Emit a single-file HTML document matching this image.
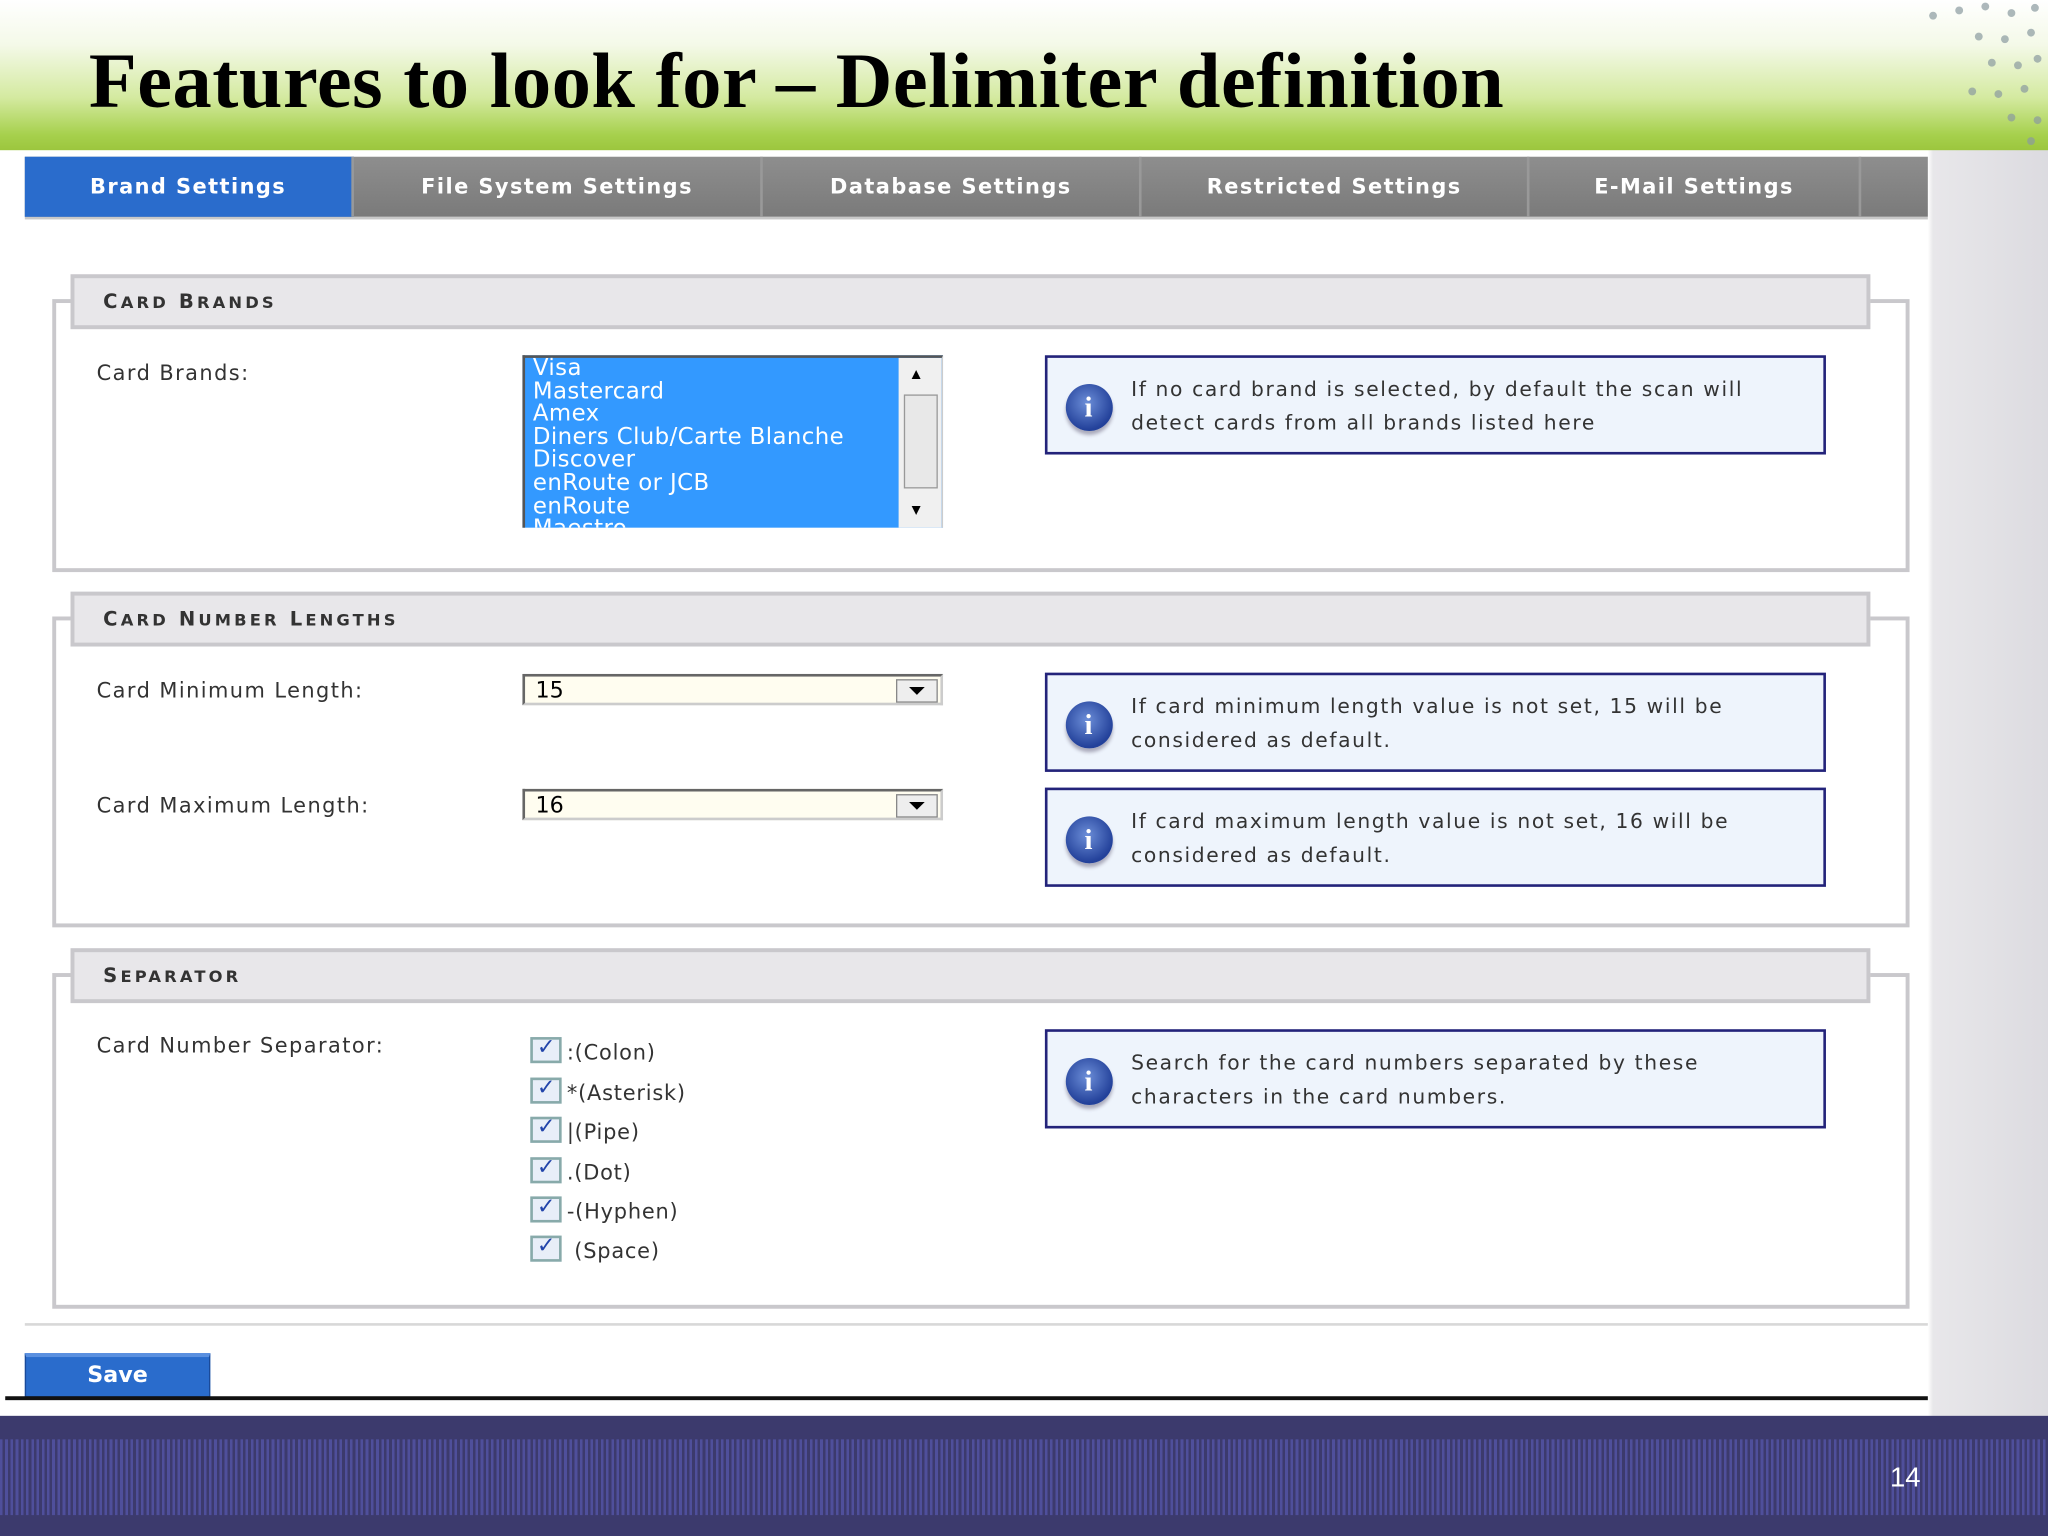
<!DOCTYPE html>
<html><head><meta charset="utf-8"><style>
html,body{margin:0;padding:0;width:2048px;height:1536px;overflow:hidden;background:#fff}
#w{position:absolute;left:0;top:0;width:1568px;height:1176px;transform:scale(1.306122);transform-origin:0 0;font-family:"DejaVu Sans","Liberation Sans",sans-serif;background:linear-gradient(90deg,#fff 0,#fff 1476px,#e8e7ea 1480px,#dcdbe0 1568px)}
.a{position:absolute}
#hdr{left:0;top:0;width:1568px;height:115px;background:linear-gradient(180deg,#fff 0%,#f4f9e8 30%,#d4eaa0 65%,#a6d04c 90%,#9cc63e 100%)}
#title{left:68px;top:28px;font-family:"Liberation Serif",serif;font-weight:bold;font-size:60px;color:#000;letter-spacing:0.4px}
#tabs{left:19px;top:120px;width:1457px;height:46px;background:linear-gradient(#8e8e8e,#7a7a7a);border-bottom:2px solid #c8c8c8}
.tab{position:absolute;top:0;height:46px;line-height:46px;text-align:center;color:#fff;font-weight:bold;font-size:16px;border-right:2px solid #999;letter-spacing:1.1px}
.fs{position:absolute;left:40px;width:1416px;border:3px solid #c9c8cc;background:#fff}
.leg{position:absolute;left:54px;width:1350px;height:36px;background:#e8e7ea;border:3px solid #c9c8cc;font-size:15px;font-weight:bold;color:#333;letter-spacing:2.4px;line-height:36px;padding-left:22px;box-sizing:content-box}
.leg span{font-size:12.5px}
.lbl{position:absolute;left:74px;font-size:16px;color:#333;letter-spacing:1.1px}
.info{position:absolute;left:800px;width:594px;height:72px;border:2px solid #23237a;background:#eef4fc;font-size:15.5px;color:#333;letter-spacing:1.25px;line-height:25.5px;white-space:nowrap}
.info .t{position:absolute;left:64px;top:12px}
.ic{position:absolute;left:14px;top:20px;width:36px;height:36px;border-radius:50%;background:radial-gradient(circle at 45% 40%,#6c8ed8,#23419a 70%);box-shadow:0 3px 3px #aab;color:#fff;font:bold 22px "Liberation Serif",serif;text-align:center;line-height:36px}
.sel{position:absolute;left:400px;width:322px;height:24px;border:2px solid #666;border-right-color:#ccc;border-bottom-color:#ccc;background:#fffdf0;font-size:17px;line-height:22px;padding-left:8px;box-sizing:border-box}
.sel b{position:absolute;right:2px;top:2px;width:30px;height:16px;border:1px solid #888;background:#eee}
.sel b:after{content:"";position:absolute;left:9px;top:5px;border:6px solid transparent;border-top:6px solid #000}
.cb{position:absolute;left:406px;font-size:16px;color:#333;letter-spacing:.6px}
.cb i{display:inline-block;width:20px;height:16px;border:2px solid #8aa;background:#e8eef8;vertical-align:-3px;margin-right:4px;position:relative}
.cb i:after{content:"✓";position:absolute;left:3px;top:-4px;color:#2244aa;font-size:17px;font-style:normal;font-weight:bold}
</style></head><body><div id="w">
<div id="hdr" class="a"></div>
<svg class="a" style="left:1460px;top:0" width="108" height="115"><g fill="#8a9aa0" opacity=".7">
<circle cx="20" cy="12" r="3"/><circle cx="40" cy="8" r="3"/><circle cx="60" cy="5" r="3"/><circle cx="80" cy="10" r="3"/><circle cx="98" cy="6" r="3"/>
<circle cx="55" cy="28" r="3"/><circle cx="75" cy="30" r="3"/><circle cx="95" cy="25" r="3"/><circle cx="65" cy="48" r="3"/><circle cx="85" cy="50" r="3"/><circle cx="100" cy="45" r="3"/>
<circle cx="50" cy="70" r="3"/><circle cx="70" cy="72" r="3"/><circle cx="90" cy="68" r="3"/><circle cx="80" cy="90" r="3"/><circle cx="100" cy="92" r="3"/><circle cx="95" cy="108" r="3"/></g></svg>
<div id="title" class="a">Features to look for – Delimiter definition</div>
<div id="tabs" class="a">
<div class="tab" style="left:0;width:250px;background:#2a6ccc">Brand Settings</div>
<div class="tab" style="left:252px;width:311px">File System Settings</div>
<div class="tab" style="left:565px;width:288px">Database Settings</div>
<div class="tab" style="left:855px;width:295px">Restricted Settings</div>
<div class="tab" style="left:1152px;width:252px">E-Mail Settings</div>
</div>

<div class="fs" style="top:229px;height:203px"></div>
<div class="leg" style="top:210px">C<span>ARD</span> B<span>RANDS</span></div>
<div class="lbl" style="top:276px">Card Brands:</div>
<div class="a" style="left:400px;top:272px;width:322px;height:132px;border:2px solid #555;border-right:1px solid #ccc;border-bottom:0;box-sizing:border-box;overflow:hidden;background:#3399ff">
<div style="color:#fff;font-size:17.5px;line-height:17.6px;padding-left:6px;letter-spacing:.3px;white-space:nowrap">Visa<br>Mastercard<br>Amex<br>Diners Club/Carte Blanche<br>Discover<br>enRoute or JCB<br>enRoute<br>Maestro</div>
<div class="a" style="right:0;top:0;width:33px;height:132px;background:#f0f0f0"><div class="a" style="left:4px;top:28px;width:24px;height:70px;border:1px solid #999;background:#e8e8e8"></div><div class="a" style="left:10px;top:8px;font-size:9px">▲</div><div class="a" style="left:10px;top:112px;font-size:9px">▼</div></div></div>
<div class="info" style="top:272px"><div class="ic">i</div><div class="t">If no card brand is selected, by default the scan will<br>detect cards from all brands listed here</div></div>

<div class="fs" style="top:472px;height:232px"></div>
<div class="leg" style="top:453px">C<span>ARD</span> N<span>UMBER</span> L<span>ENGTHS</span></div>
<div class="lbl" style="top:519px">Card Minimum Length:</div>
<div class="sel" style="top:516px">15<b></b></div>
<div class="info" style="top:515px"><div class="ic">i</div><div class="t">If card minimum length value is not set, 15 will be<br>considered as default.</div></div>
<div class="lbl" style="top:607px">Card Maximum Length:</div>
<div class="sel" style="top:604px">16<b></b></div>
<div class="info" style="top:603px"><div class="ic">i</div><div class="t">If card maximum length value is not set, 16 will be<br>considered as default.</div></div>

<div class="fs" style="top:745px;height:251px"></div>
<div class="leg" style="top:726px">S<span>EPARATOR</span></div>
<div class="lbl" style="top:791px">Card Number Separator:</div>
<div class="cb" style="top:794px"><i></i>:(Colon)</div>
<div class="cb" style="top:825px"><i></i>*(Asterisk)</div>
<div class="cb" style="top:855px"><i></i>|(Pipe)</div>
<div class="cb" style="top:886px"><i></i>.(Dot)</div>
<div class="cb" style="top:916px"><i></i>-(Hyphen)</div>
<div class="cb" style="top:946px"><i></i> (Space)</div>
<div class="info" style="top:788px"><div class="ic">i</div><div class="t">Search for the card numbers separated by these<br>characters in the card numbers.</div></div>

<div class="a" style="left:19px;top:1013px;width:1457px;height:2px;background:#d8d8d8"></div>
<div class="a" style="left:19px;top:1036px;width:142px;height:34px;background:#2a6ccc;border:1px solid #1a4a99;border-top:3px solid #5a90e0;box-sizing:border-box;color:#fff;font-weight:bold;font-size:17px;text-align:center;line-height:28px">Save</div>
<div class="a" style="left:4px;top:1069px;width:1472px;height:3px;background:#111"></div>
<div class="a" style="left:0;top:1084px;width:1568px;height:92px;background:#3c3a6d"></div>
<div class="a" style="left:0;top:1102px;width:1568px;height:58px;background:repeating-linear-gradient(90deg,#5252a0 0 2px,#3c3a6d 2px 4px),#3c3a6d;opacity:.9"></div>
<div class="a" style="left:1447px;top:1120px;color:#fff;font-size:21px;font-family:'Liberation Sans',sans-serif">14</div>
</div></body></html>
